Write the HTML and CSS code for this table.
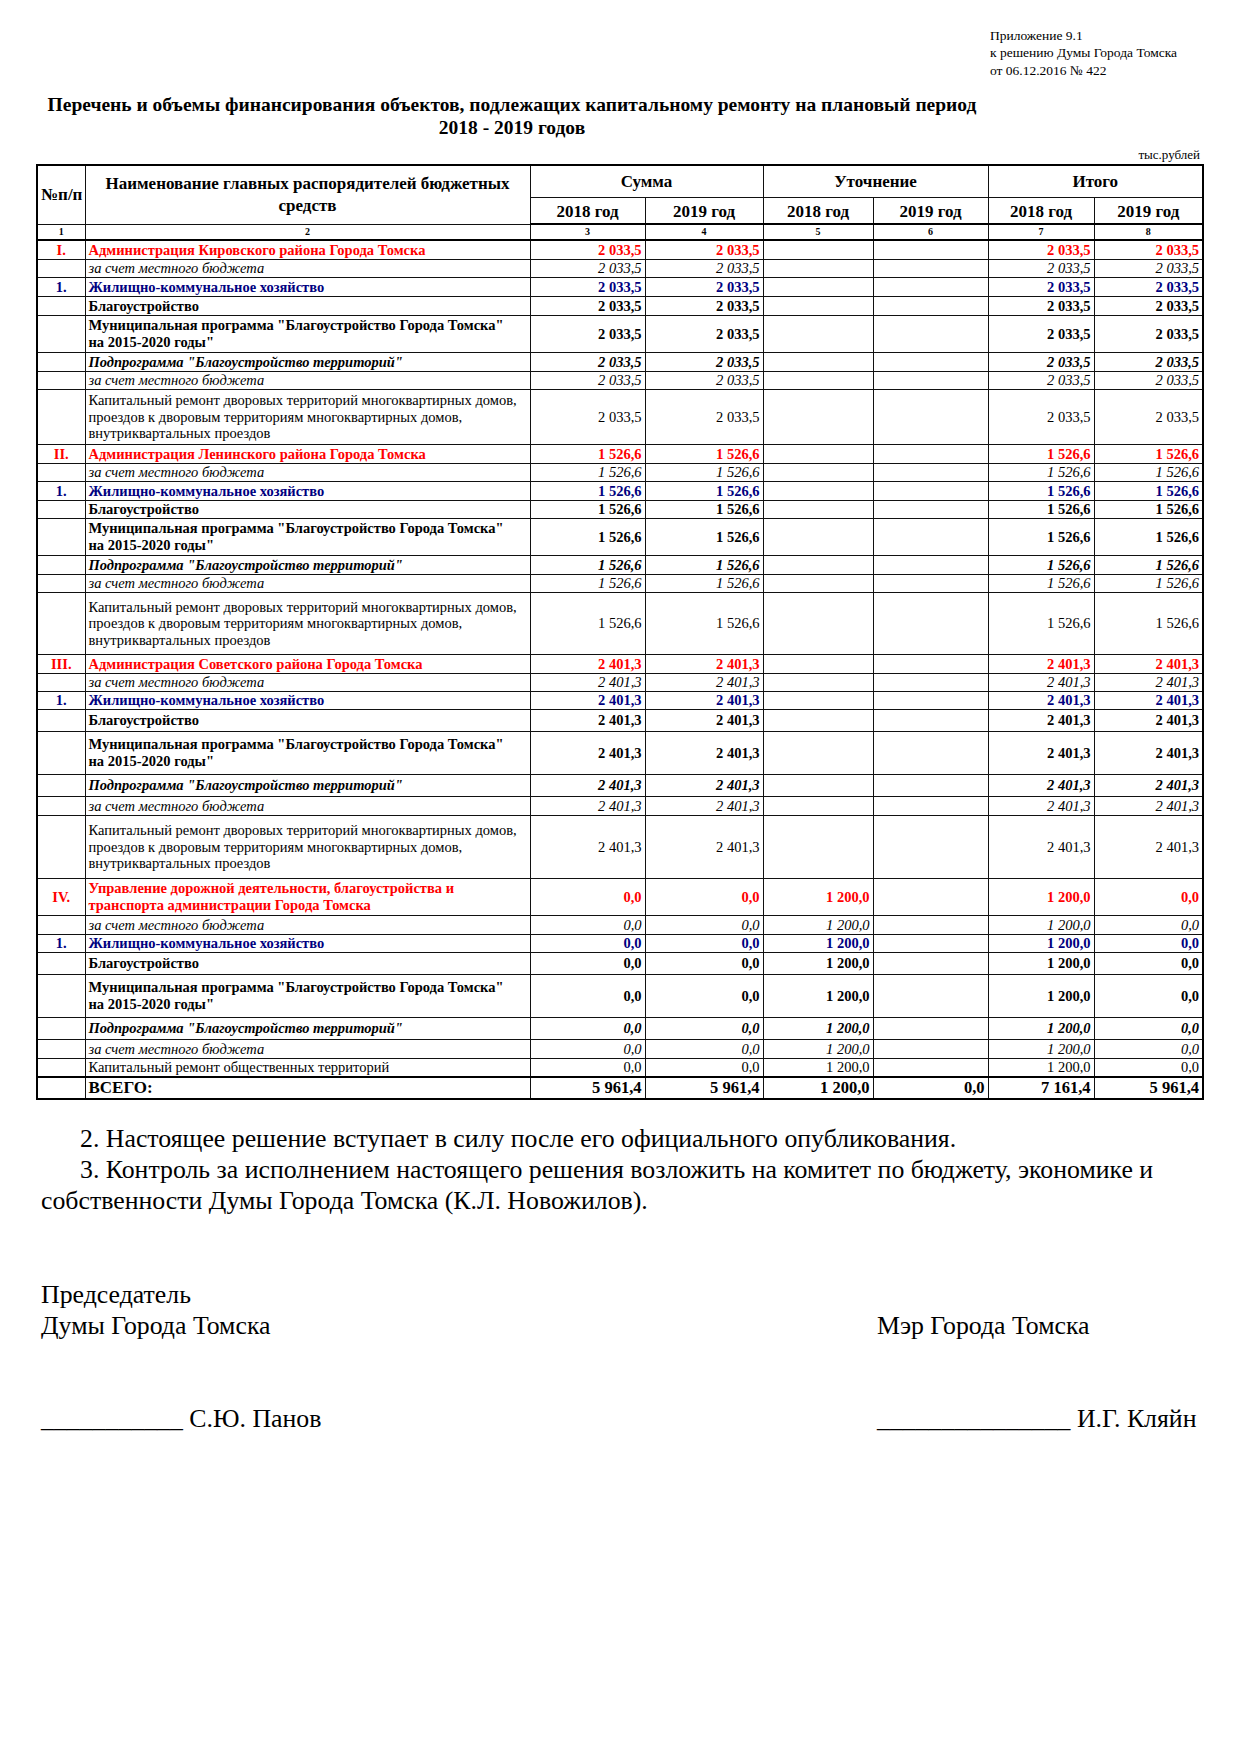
FILE: index.html
```html
<!DOCTYPE html>
<html lang="ru">
<head>
<meta charset="utf-8">
<title>Приложение 9.1</title>
<link rel="stylesheet" href="styles.css">
</head>
<body>
<div class="page">
  <div class="appendix">Приложение 9.1<br>к решению Думы Города Томска<br>от 06.12.2016 № 422</div>
  <h1 class="title">Перечень и объемы финансирования объектов, подлежащих капитальному ремонту на плановый период<br>2018 - 2019 годов</h1>
  <div class="units">тыс.рублей</div>
  <table class="budget">
    <colgroup>
      <col class="c-num"><col class="c-name"><col class="c-v1"><col class="c-v2"><col class="c-v3"><col class="c-v4"><col class="c-v5"><col class="c-v6">
    </colgroup>
    <thead>
      <tr class="hd1">
        <th rowspan="2" class="th-num">№п/п</th>
        <th rowspan="2" class="th-name">Наименование главных распорядителей бюджетных<br>средств</th>
        <th colspan="2">Сумма</th>
        <th colspan="2">Уточнение</th>
        <th colspan="2">Итого</th>
      </tr>
      <tr class="hd2">
        <th>2018 год</th><th>2019 год</th><th>2018 год</th><th>2019 год</th><th>2018 год</th><th>2019 год</th>
      </tr>
      <tr class="hd3">
        <th>1</th><th>2</th><th>3</th><th>4</th><th>5</th><th>6</th><th>7</th><th>8</th>
      </tr>
    </thead>
    <tbody>
      <!-- I -->
      <tr class="r-admin h19"><td class="n">I.</td><td>Администрация Кировского района Города Томска</td><td>2 033,5</td><td>2 033,5</td><td></td><td></td><td>2 033,5</td><td>2 033,5</td></tr>
      <tr class="r-local h18"><td class="n"></td><td>за счет местного бюджета</td><td>2 033,5</td><td>2 033,5</td><td></td><td></td><td>2 033,5</td><td>2 033,5</td></tr>
      <tr class="r-sector h19"><td class="n">1.</td><td>Жилищно-коммунальное хозяйство</td><td>2 033,5</td><td>2 033,5</td><td></td><td></td><td>2 033,5</td><td>2 033,5</td></tr>
      <tr class="r-bold h19"><td class="n"></td><td>Благоустройство</td><td>2 033,5</td><td>2 033,5</td><td></td><td></td><td>2 033,5</td><td>2 033,5</td></tr>
      <tr class="r-bold h37"><td class="n"></td><td>Муниципальная программа "Благоустройство Города Томска"<br>на 2015-2020 годы"</td><td>2 033,5</td><td>2 033,5</td><td></td><td></td><td>2 033,5</td><td>2 033,5</td></tr>
      <tr class="r-sub h19"><td class="n"></td><td>Подпрограмма "Благоустройство территорий"</td><td>2 033,5</td><td>2 033,5</td><td></td><td></td><td>2 033,5</td><td>2 033,5</td></tr>
      <tr class="r-local h18"><td class="n"></td><td>за счет местного бюджета</td><td>2 033,5</td><td>2 033,5</td><td></td><td></td><td>2 033,5</td><td>2 033,5</td></tr>
      <tr class="r-plain h55"><td class="n"></td><td>Капитальный ремонт дворовых территорий многоквартирных домов,<br>проездов к дворовым территориям многоквартирных домов,<br>внутриквартальных проездов</td><td>2 033,5</td><td>2 033,5</td><td></td><td></td><td>2 033,5</td><td>2 033,5</td></tr>
      <!-- II -->
      <tr class="r-admin h19"><td class="n">II.</td><td>Администрация Ленинского района Города Томска</td><td>1 526,6</td><td>1 526,6</td><td></td><td></td><td>1 526,6</td><td>1 526,6</td></tr>
      <tr class="r-local h18"><td class="n"></td><td>за счет местного бюджета</td><td>1 526,6</td><td>1 526,6</td><td></td><td></td><td>1 526,6</td><td>1 526,6</td></tr>
      <tr class="r-sector h19"><td class="n">1.</td><td>Жилищно-коммунальное хозяйство</td><td>1 526,6</td><td>1 526,6</td><td></td><td></td><td>1 526,6</td><td>1 526,6</td></tr>
      <tr class="r-bold h18"><td class="n"></td><td>Благоустройство</td><td>1 526,6</td><td>1 526,6</td><td></td><td></td><td>1 526,6</td><td>1 526,6</td></tr>
      <tr class="r-bold h37"><td class="n"></td><td>Муниципальная программа "Благоустройство Города Томска"<br>на 2015-2020 годы"</td><td>1 526,6</td><td>1 526,6</td><td></td><td></td><td>1 526,6</td><td>1 526,6</td></tr>
      <tr class="r-sub h19"><td class="n"></td><td>Подпрограмма "Благоустройство территорий"</td><td>1 526,6</td><td>1 526,6</td><td></td><td></td><td>1 526,6</td><td>1 526,6</td></tr>
      <tr class="r-local h18"><td class="n"></td><td>за счет местного бюджета</td><td>1 526,6</td><td>1 526,6</td><td></td><td></td><td>1 526,6</td><td>1 526,6</td></tr>
      <tr class="r-plain h62"><td class="n"></td><td>Капитальный ремонт дворовых территорий многоквартирных домов,<br>проездов к дворовым территориям многоквартирных домов,<br>внутриквартальных проездов</td><td>1 526,6</td><td>1 526,6</td><td></td><td></td><td>1 526,6</td><td>1 526,6</td></tr>
      <!-- III -->
      <tr class="r-admin h19"><td class="n">III.</td><td>Администрация Советского района Города Томска</td><td>2 401,3</td><td>2 401,3</td><td></td><td></td><td>2 401,3</td><td>2 401,3</td></tr>
      <tr class="r-local h18"><td class="n"></td><td>за счет местного бюджета</td><td>2 401,3</td><td>2 401,3</td><td></td><td></td><td>2 401,3</td><td>2 401,3</td></tr>
      <tr class="r-sector h18"><td class="n">1.</td><td>Жилищно-коммунальное хозяйство</td><td>2 401,3</td><td>2 401,3</td><td></td><td></td><td>2 401,3</td><td>2 401,3</td></tr>
      <tr class="r-bold h22"><td class="n"></td><td>Благоустройство</td><td>2 401,3</td><td>2 401,3</td><td></td><td></td><td>2 401,3</td><td>2 401,3</td></tr>
      <tr class="r-bold h43"><td class="n"></td><td>Муниципальная программа "Благоустройство Города Томска"<br>на 2015-2020 годы"</td><td>2 401,3</td><td>2 401,3</td><td></td><td></td><td>2 401,3</td><td>2 401,3</td></tr>
      <tr class="r-sub h22"><td class="n"></td><td>Подпрограмма "Благоустройство территорий"</td><td>2 401,3</td><td>2 401,3</td><td></td><td></td><td>2 401,3</td><td>2 401,3</td></tr>
      <tr class="r-local h19"><td class="n"></td><td>за счет местного бюджета</td><td>2 401,3</td><td>2 401,3</td><td></td><td></td><td>2 401,3</td><td>2 401,3</td></tr>
      <tr class="r-plain h63"><td class="n"></td><td>Капитальный ремонт дворовых территорий многоквартирных домов,<br>проездов к дворовым территориям многоквартирных домов,<br>внутриквартальных проездов</td><td>2 401,3</td><td>2 401,3</td><td></td><td></td><td>2 401,3</td><td>2 401,3</td></tr>
      <!-- IV -->
      <tr class="r-admin h37"><td class="n">IV.</td><td>Управление дорожной деятельности, благоустройства и<br>транспорта администрации Города Томска</td><td>0,0</td><td>0,0</td><td>1 200,0</td><td></td><td>1 200,0</td><td>0,0</td></tr>
      <tr class="r-local h19"><td class="n"></td><td>за счет местного бюджета</td><td>0,0</td><td>0,0</td><td>1 200,0</td><td></td><td>1 200,0</td><td>0,0</td></tr>
      <tr class="r-sector h18"><td class="n">1.</td><td>Жилищно-коммунальное хозяйство</td><td>0,0</td><td>0,0</td><td>1 200,0</td><td></td><td>1 200,0</td><td>0,0</td></tr>
      <tr class="r-bold h22"><td class="n"></td><td>Благоустройство</td><td>0,0</td><td>0,0</td><td>1 200,0</td><td></td><td>1 200,0</td><td>0,0</td></tr>
      <tr class="r-bold h43"><td class="n"></td><td>Муниципальная программа "Благоустройство Города Томска"<br>на 2015-2020 годы"</td><td>0,0</td><td>0,0</td><td>1 200,0</td><td></td><td>1 200,0</td><td>0,0</td></tr>
      <tr class="r-sub h22"><td class="n"></td><td>Подпрограмма "Благоустройство территорий"</td><td>0,0</td><td>0,0</td><td>1 200,0</td><td></td><td>1 200,0</td><td>0,0</td></tr>
      <tr class="r-local h19"><td class="n"></td><td>за счет местного бюджета</td><td>0,0</td><td>0,0</td><td>1 200,0</td><td></td><td>1 200,0</td><td>0,0</td></tr>
      <tr class="r-plain h19"><td class="n"></td><td>Капитальный ремонт общественных территорий</td><td>0,0</td><td>0,0</td><td>1 200,0</td><td></td><td>1 200,0</td><td>0,0</td></tr>
      <tr class="r-total h22"><td class="n"></td><td>ВСЕГО:</td><td>5 961,4</td><td>5 961,4</td><td>1 200,0</td><td>0,0</td><td>7 161,4</td><td>5 961,4</td></tr>
    </tbody>
  </table>
  <div class="decision">
    <p class="para">2. Настоящее решение вступает в силу после его официального опубликования.</p>
    <p class="para">3. Контроль за исполнением настоящего решения возложить на комитет по бюджету, экономике и собственности Думы Города Томска (К.Л. Новожилов).</p>
  </div>
  <div class="signatures">
    <div class="sig sig-left">
      <div class="sig-role">Председатель<br>Думы Города Томска</div>
      <div class="sig-line">___________ С.Ю. Панов</div>
    </div>
    <div class="sig sig-right">
      <div class="sig-role">Мэр Города Томска</div>
      <div class="sig-line">_______________ И.Г. Кляйн</div>
    </div>
  </div>
</div>
</body>
</html>
```
FILE: styles.css
```css
html, body {
  margin: 0;
  padding: 0;
  background: #fff;
}
body {
  font-family: "Liberation Serif", "Times New Roman", serif;
  color: #000;
}
.page {
  width: 1240px;
  padding-top: 27px;
}
.appendix {
  margin-left: 990px;
  font-size: 13.5px;
  line-height: 17.3px;
}
.title {
  margin: 14px 0 0 37px;
  width: 950px;
  text-align: center;
  font-size: 19.5px;
  line-height: 23.5px;
  font-weight: bold;
}
.units {
  width: 1200px;
  text-align: right;
  font-size: 13px;
  line-height: 16px;
  margin-top: 7px;
}
.budget {
  margin: 1px 0 0 36px;
  border-collapse: collapse;
  table-layout: fixed;
  width: 1168px;
  border: 2px solid #000;
}
.c-num { width: 48px; }
.c-name { width: 445px; }
.c-v1 { width: 115px; }
.c-v2 { width: 118px; }
.c-v3 { width: 110px; }
.c-v4 { width: 115px; }
.c-v5 { width: 106px; }
.c-v6 { width: 109px; }

.budget th, .budget td {
  border: 1px solid #111;
  padding: 0 3px;
  vertical-align: middle;
  font-size: 14.5px;
  line-height: 16.5px;
  white-space: nowrap;
  overflow: hidden;
}
.budget th {
  font-weight: bold;
  text-align: center;
  font-size: 17px;
  line-height: 22px;
}
.hd1 { height: 33px; }
.hd2 { height: 25px; }
.hd2 th { border-bottom: 2px solid #000; padding-top: 3px; }
.hd3 { height: 16px; }
.hd3 th {
  font-size: 10px;
  line-height: 12px;
  padding-top: 0;
  border-bottom: 2px solid #000;
}
.th-num { font-size: 16px; padding: 0; }

.budget td { text-align: right; }
.budget td:nth-child(2) { text-align: left; }
.budget td.n { text-align: center; }

.h18 { height: 18px; }
.h19 { height: 19px; }
.h22 { height: 22px; }
.h37 { height: 37px; }
.h43 { height: 43px; }
.h55 { height: 55px; }
.h62 { height: 62px; }
.h63 { height: 63px; }

.r-admin td { color: #f00; font-weight: bold; }
.r-sector td { color: #000080; font-weight: bold; }
.r-bold td { font-weight: bold; }
.r-sub td { font-weight: bold; font-style: italic; }
.r-local td { font-style: italic; }
.r-plain td { font-weight: normal; }
.r-total td {
  font-weight: bold;
  font-size: 16.5px;
  border-top: 2px solid #000;
}
.r-total td:nth-child(2) { font-size: 17px; }

.decision {
  margin: 23px 0 0 41px;
  width: 1165px;
}
.para {
  margin: 0;
  text-indent: 39px;
  font-size: 25.8px;
  line-height: 31px;
}
.signatures {
  display: flex;
  margin: 63px 0 0 41px;
  font-size: 25.8px;
  line-height: 31px;
}
.sig-left {
  flex: 0 0 836px;
}
.sig-right {
  flex: 0 0 auto;
  padding-top: 31px;
}
.sig-line {
  margin-top: 62px;
  white-space: nowrap;
}
```
